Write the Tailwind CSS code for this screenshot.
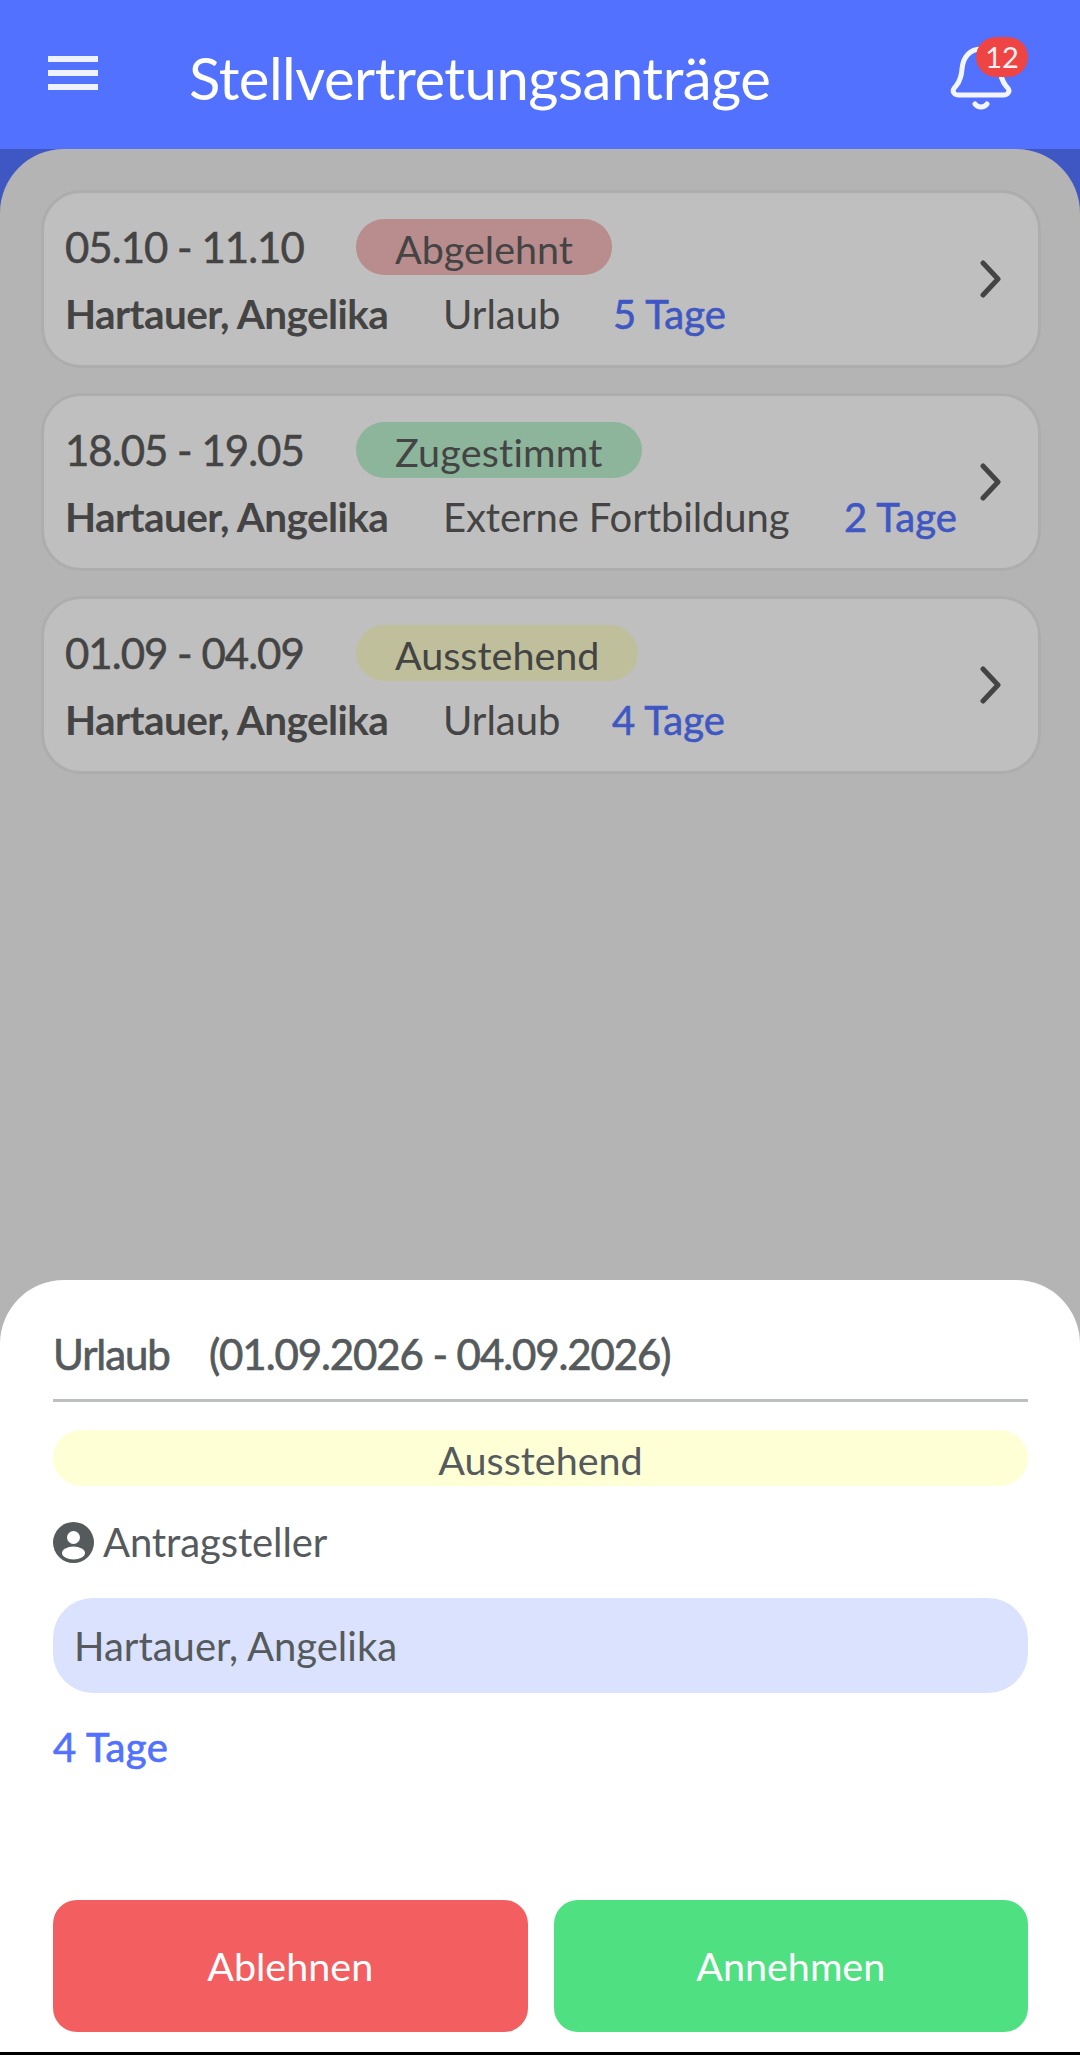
<!DOCTYPE html>
<html lang="de">
<head>
    <meta charset="UTF-8">
    <title>Stellvertretungsanträge</title>
    <script src="https://cdn.jsdelivr.net/npm/@tailwindcss/browser@4"></script>
</head>
<body class="font-['Lato','Open_Sans',sans-serif] bg-black">
<div class="relative w-[1080px] h-[2055px] overflow-hidden flex flex-col bg-[#3f57c3]">

    <!-- header -->
    <header class="h-[149px] shrink-0 bg-[#5271ff] flex items-center text-white relative">
        <div class="ml-[48px] w-[50px] flex flex-col gap-[8px] -mt-[3px]">
            <span class="h-[6px] bg-[#eef1ff]"></span>
            <span class="h-[6px] bg-[#eef1ff]"></span>
            <span class="h-[6px] bg-[#eef1ff]"></span>
        </div>
        <h1 class="ml-[91px] text-[58px] leading-none tracking-[-0.5px] mt-[7px]">Stellvertretungsanträge</h1>
        <svg class="absolute left-[950px] top-[46px]" width="62" height="66" viewBox="0 0 62 66" fill="none" stroke="#f4f6ff" stroke-width="5" stroke-linecap="round" stroke-linejoin="round">
            <path d="M31 3C20 3 13 11 12 23c-.5 8-2 12-6 17-2 2-4 5-2 7 1 2 3 2 5 2h44c2 0 4 0 5-2 2-2 0-5-2-7-4-5-5.500-9-6-17C49 11 42 3 31 3Z"/>
            <path d="M25 58c3 4 9 4 12 0"/>
        </svg>
        <span class="absolute left-[976px] top-[37px] w-[52px] h-[40px] rounded-full bg-[#ef4444] text-[#fff1f1] text-[29px] leading-[40px] text-center">12</span>
    </header>

    <!-- list -->
    <main class="flex-1 bg-[#b4b4b4] rounded-t-[64px] pl-[41px] pr-[39px] pt-[41px] flex flex-col gap-[25px] text-[#444444]">

        <div class="h-[178px] rounded-[40px] bg-[#bfbfbf] border-[3px] border-[#adadad] pl-[21px] pr-[36px] flex items-center justify-between">
            <div class="flex flex-col gap-[13px]">
                <div class="flex items-center h-[56px]">
                    <span class="w-[291px] text-[42px] leading-none tracking-[-1px] [-webkit-text-stroke:0.5px]">05.10 - 11.10</span>
                    <span class="h-[56px] px-[39px] rounded-full bg-[#b98d8d] text-[39.500px] leading-[60px]">Abgelehnt</span>
                </div>
                <div class="flex items-center text-[40px] leading-[52px]">
                    <span class="w-[378px] text-[40.500px] font-bold tracking-[-0.6px]">Hartauer, Angelika</span>
                    <span class="w-[170px] font-normal">Urlaub</span>
                    <span class="text-[#3f57c3] [-webkit-text-stroke:0.6px]">5 Tage</span>
                </div>
            </div>
            <svg width="22" height="38" viewBox="0 0 22 38" fill="none" stroke="#444444" stroke-width="5" stroke-linecap="round" stroke-linejoin="round"><path d="M3 3l15 16L3 35"/></svg>
        </div>

        <div class="h-[178px] rounded-[40px] bg-[#bfbfbf] border-[3px] border-[#adadad] pl-[21px] pr-[36px] flex items-center justify-between">
            <div class="flex flex-col gap-[13px]">
                <div class="flex items-center h-[56px]">
                    <span class="w-[291px] text-[42px] leading-none tracking-[-1px] [-webkit-text-stroke:0.5px]">18.05 - 19.05</span>
                    <span class="h-[56px] px-[39px] rounded-full bg-[#8db59b] text-[39.500px] tracking-[0.2px] leading-[60px]">Zugestimmt</span>
                </div>
                <div class="flex items-center text-[40px] leading-[52px]">
                    <span class="w-[378px] text-[40.500px] font-bold tracking-[-0.6px]">Hartauer, Angelika</span>
                    <span class="w-[401px] font-normal tracking-[-0.1px]">Externe Fortbildung</span>
                    <span class="text-[#3f57c3] [-webkit-text-stroke:0.6px]">2 Tage</span>
                </div>
            </div>
            <svg width="22" height="38" viewBox="0 0 22 38" fill="none" stroke="#444444" stroke-width="5" stroke-linecap="round" stroke-linejoin="round"><path d="M3 3l15 16L3 35"/></svg>
        </div>

        <div class="h-[178px] rounded-[40px] bg-[#bfbfbf] border-[3px] border-[#adadad] pl-[21px] pr-[36px] flex items-center justify-between">
            <div class="flex flex-col gap-[13px]">
                <div class="flex items-center h-[56px]">
                    <span class="w-[291px] text-[42px] leading-none tracking-[-1px] [-webkit-text-stroke:0.5px]">01.09 - 04.09</span>
                    <span class="h-[56px] px-[39px] rounded-full bg-[#bfbf9b] text-[39.500px] leading-[60px]">Ausstehend</span>
                </div>
                <div class="flex items-center text-[40px] leading-[52px]">
                    <span class="w-[378px] text-[40.500px] font-bold tracking-[-0.6px]">Hartauer, Angelika</span>
                    <span class="w-[169px] font-normal">Urlaub</span>
                    <span class="text-[#3f57c3] [-webkit-text-stroke:0.6px]">4 Tage</span>
                </div>
            </div>
            <svg width="22" height="38" viewBox="0 0 22 38" fill="none" stroke="#444444" stroke-width="5" stroke-linecap="round" stroke-linejoin="round"><path d="M3 3l15 16L3 35"/></svg>
        </div>
    </main>

    <div class="h-[3px] shrink-0 bg-black"></div>

    <!-- bottom sheet -->
    <section class="absolute left-0 right-0 top-[1280px] h-[772px] bg-white rounded-t-[64px] pl-[53px] pr-[52px] flex flex-col text-[#555a5c]">
        <div class="h-[122px] shrink-0 border-b-[3px] border-[#bdbfc0] flex items-center text-[42px] tracking-[-1.1px] [-webkit-text-stroke:0.7px] pt-[30px]">
            <span class="w-[156px]">Urlaub</span><span>(01.09.2026 - 04.09.2026)</span>
        </div>
        <div class="mt-[28px] h-[56px] shrink-0 rounded-full bg-[#ffffd6] text-center text-[39.500px] leading-[60px]">Ausstehend</div>
        <div class="mt-[34px] flex items-center gap-[9px] text-[40px] leading-[44px]">
            <svg width="41" height="41" viewBox="0 0 41 41"><circle cx="20.5" cy="20.5" r="20.5" fill="#555a5c"/><circle cx="20.5" cy="15.5" r="6.5" fill="#fff"/><ellipse cx="20.5" cy="31" rx="11.5" ry="6.5" fill="#fff"/></svg>
            <span class="tracking-[-0.1px]">Antragsteller</span>
        </div>
        <div class="mt-[34px] h-[95px] shrink-0 rounded-[40px] bg-[#dbe2fd] pl-[21px] flex items-center text-[40px]">Hartauer, Angelika</div>
        <div class="mt-[29px] text-[40px] leading-[50px] tracking-[0.4px] text-[#5271ff] [-webkit-text-stroke:0.7px]">4 Tage</div>
        <div class="mt-auto mb-[20px] flex gap-[26px] text-white text-[39.500px]">
            <button class="flex-1 h-[132px] rounded-[24px] bg-[#f35e60]">Ablehnen</button>
            <button class="flex-1 h-[132px] rounded-[24px] bg-[#4fe082]">Annehmen</button>
        </div>
    </section>
</div>
</body>
</html>
